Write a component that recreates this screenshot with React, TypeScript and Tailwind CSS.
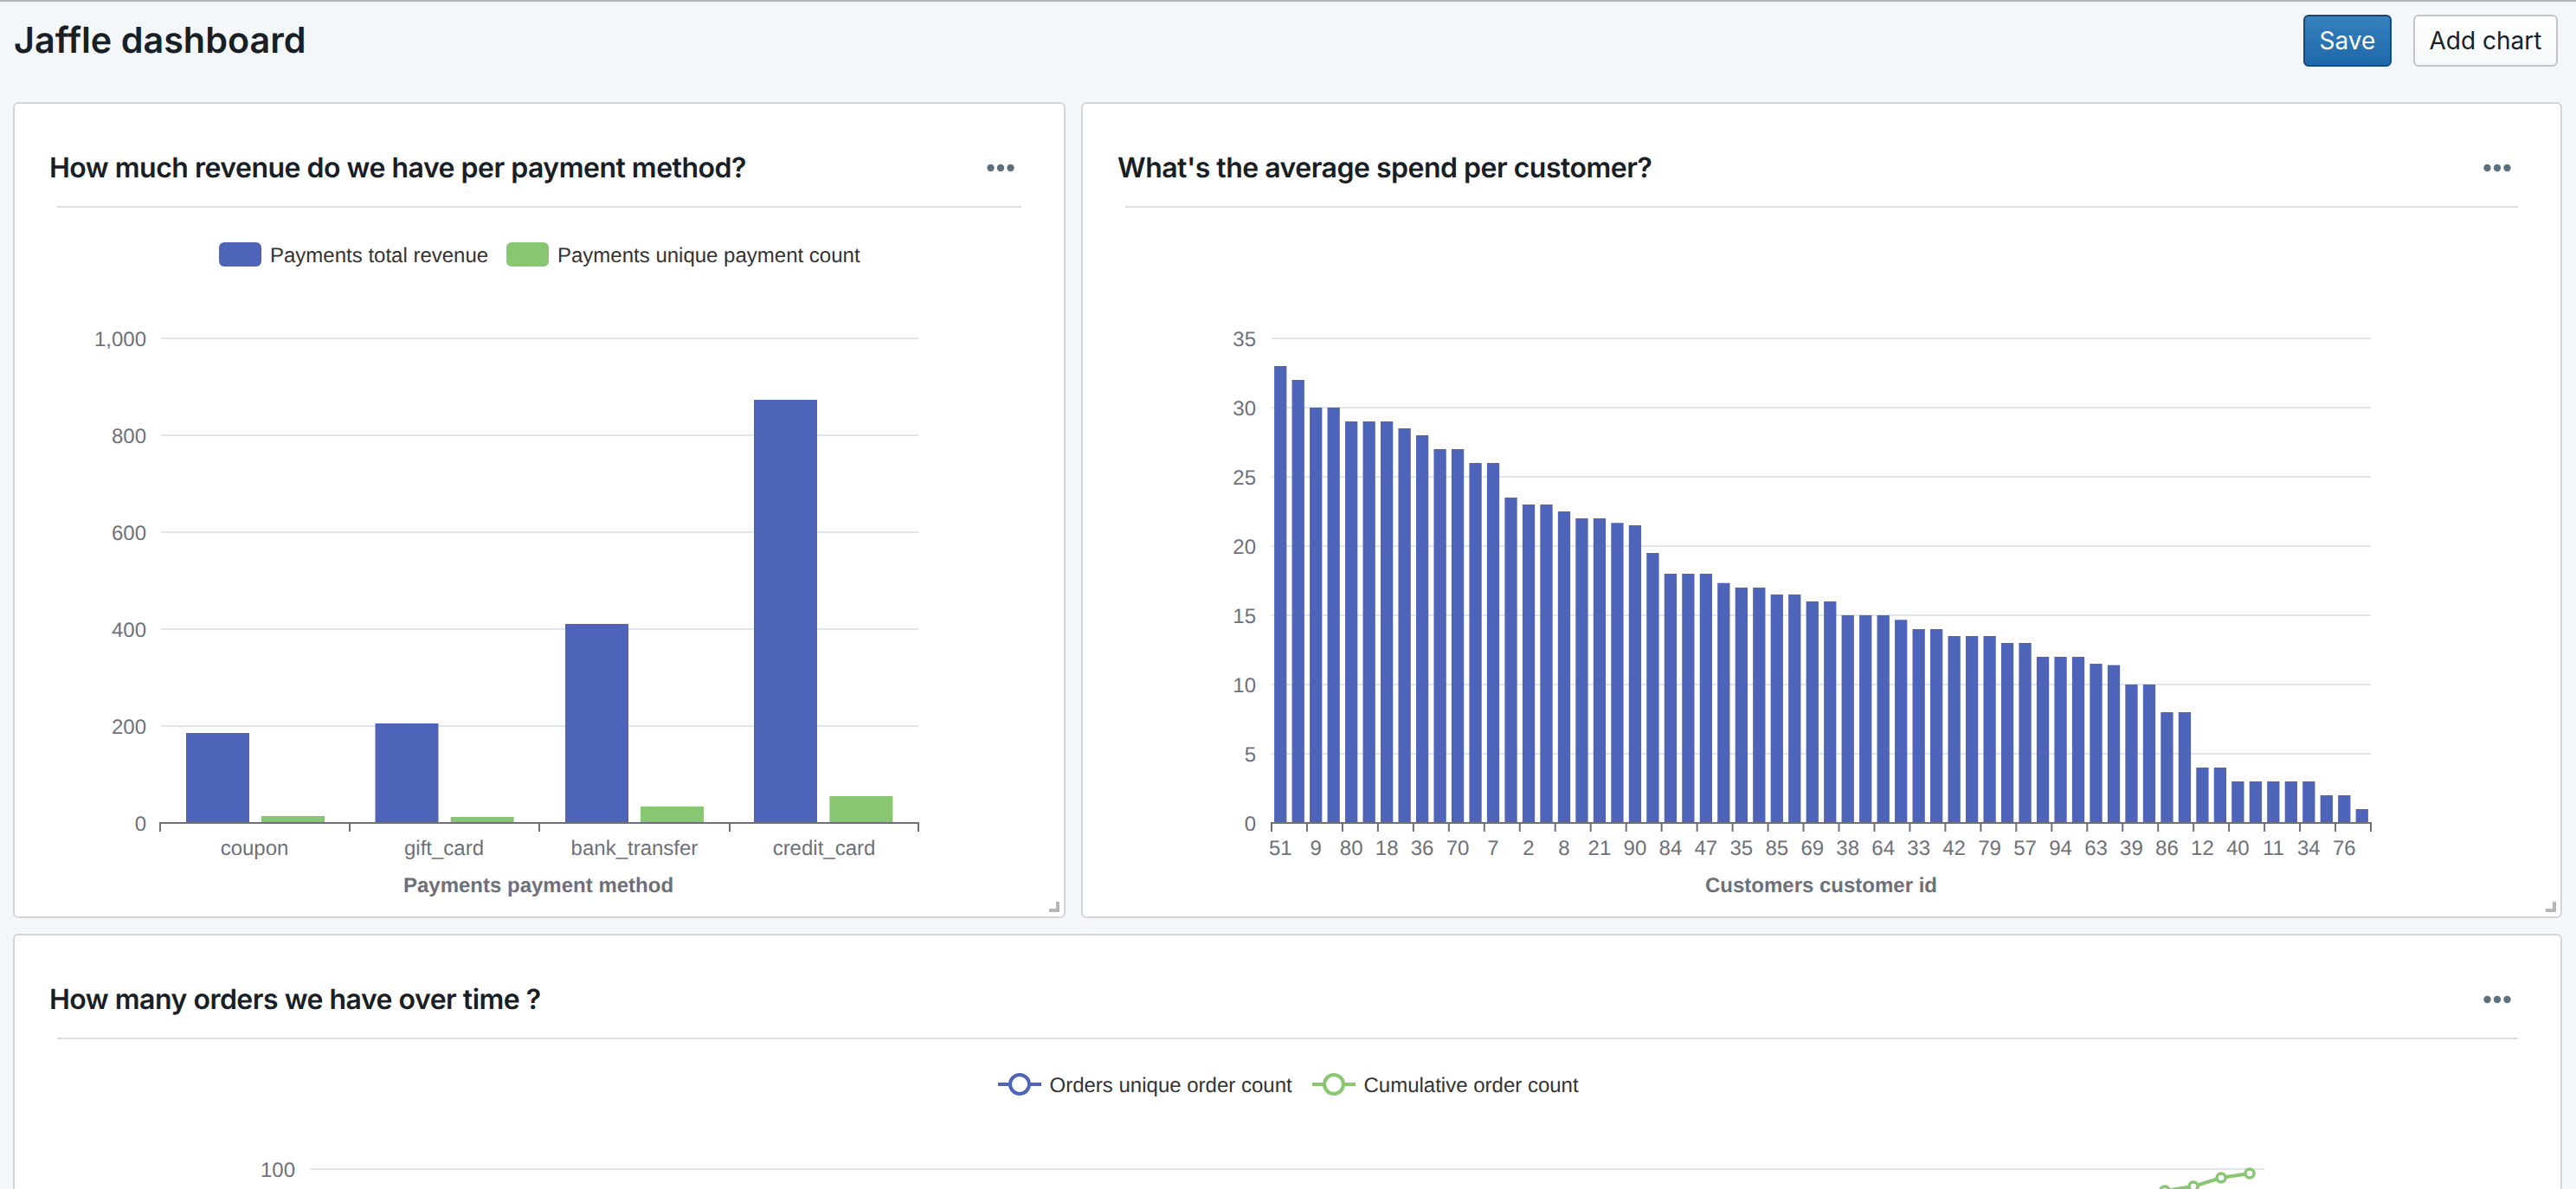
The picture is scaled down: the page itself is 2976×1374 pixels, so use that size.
const BLUE = "#4e64b9";
const GREEN = "#89c672";
const GRID = "#e0e6f1";
const AXIS = "#6e7079";

function MoreDots() {
  return (
    <svg width="32" height="10" viewBox="0 0 32 10" className="shrink-0">
      <circle cx="4.5" cy="5" r="4.2" fill="#5c7080" />
      <circle cx="16" cy="5" r="4.2" fill="#5c7080" />
      <circle cx="27.5" cy="5" r="4.2" fill="#5c7080" />
    </svg>
  );
}

function Card({ title, children }: { title: string; children: React.ReactNode }) {
  return (
    <section className="relative h-[943px] rounded-[6px] border-2 border-[#d1d5da] bg-white">
      <header className="flex h-[118px] items-center justify-between pt-[30px] pr-[57px] pl-[40px]">
        <h2 className="font-['Inter'] text-[32px] leading-[44px] font-semibold tracking-[-0.5px] text-[#182026]">{title}</h2>
        <MoreDots />
      </header>
      <div className="mx-[49px] h-[2px] bg-[#dcdfe2]" />
      {children}
      <svg width="12" height="12" viewBox="0 0 12 12" className="absolute right-[5px] bottom-[5px]">
        <path d="M8 0h4v12H0V8h8z" fill="#b5b5b5" />
      </svg>
    </section>
  );
}

function Axis({ x0, x1, ticks }: { x0: number; x1: number; ticks: number[] }) {
  return (
    <g stroke={AXIS} strokeWidth="2">
      <line x1={x0 - 1} x2={x1 + 1} y1="950" y2="950" />
      {ticks.map((t) => (
        <line key={t} x1={t} x2={t} y1="950" y2="960" />
      ))}
    </g>
  );
}

function YGrid({ x0, x1, rows, labelX }: { x0: number; x1: number; rows: [string, number][]; labelX: number }) {
  return (
    <>
      {rows.map(([label, y]) => (
        <g key={label}>
          <line x1={x0} x2={x1} y1={y} y2={y} stroke={GRID} strokeWidth="2" />
          <text x={labelX} y={y + 8.5} textAnchor="end" className="font-['Liberation_Sans'] text-[24px] fill-[#6e7079]">
            {label}
          </text>
        </g>
      ))}
    </>
  );
}

function PaymentsChart() {
  const bars = [
    { label: "coupon", cx: 294, blue: [215, 846], green: [302, 942] },
    { label: "gift_card", cx: 513, blue: [433.5, 835], green: [520.7, 943] },
    { label: "bank_transfer", cx: 733, blue: [653, 720], green: [740, 931] },
    { label: "credit_card", cx: 952, blue: [871, 461], green: [958.4, 919] },
  ];
  const rows: [string, number][] = [
    ["1,000", 390],
    ["800", 502],
    ["600", 614],
    ["400", 726],
    ["200", 838],
    ["0", 950],
  ];
  return (
    <svg width="1212" height="819" viewBox="17 240 1212 819" className="block">
      <rect x="253" y="280" width="49" height="28" rx="6" fill={BLUE} />
      <text x="312" y="303" className="font-['Liberation_Sans'] text-[24px] fill-[#333333]">Payments total revenue</text>
      <rect x="585" y="280" width="49" height="28" rx="6" fill={GREEN} />
      <text x="644" y="303" className="font-['Liberation_Sans'] text-[24px] fill-[#333333]">Payments unique payment count</text>
      <g transform="translate(0 1)">
        <YGrid x0={185} x1={1061} rows={rows} labelX={169} />
        {bars.map((b) => (
          <g key={b.label}>
            <rect x={b.blue[0]} y={b.blue[1]} width="73" height={950 - b.blue[1]} fill={BLUE} />
            <rect x={b.green[0]} y={b.green[1]} width="73" height={950 - b.green[1]} fill={GREEN} />
            <text x={b.cx} y="987" textAnchor="middle" className="font-['Liberation_Sans'] text-[24px] fill-[#6e7079]">
              {b.label}
            </text>
          </g>
        ))}
        <Axis x0={185} x1={1061} ticks={[185, 404, 623, 843, 1061]} />
      </g>
      <text x="622" y="1031" textAnchor="middle" className="font-['Liberation_Sans'] text-[24px] font-bold fill-[#6e7079]">
        Payments payment method
      </text>
    </svg>
  );
}

const spend = [
  33, 32, 30, 30, 29, 29, 29, 28.5, 28, 27, 27, 26, 26, 23.5, 23, 23, 22.5, 22, 22, 21.67, 21.5, 19.5, 18, 18, 18, 17.33,
  17, 17, 16.5, 16.5, 16, 16, 15, 15, 15, 14.67, 14, 14, 13.5, 13.5, 13.5, 13, 13, 12, 12, 12, 11.5, 11.4, 10, 10, 8, 8,
  4, 4, 3, 3, 3, 3, 3, 2, 2, 1,
];
const customerLabels = [
  "51", "9", "80", "18", "36", "70", "7", "2", "8", "21", "90", "84", "47", "35", "85", "69", "38", "64", "33", "42",
  "79", "57", "94", "63", "39", "86", "12", "40", "11", "34", "76",
];

function SpendChart() {
  const x0 = 1469;
  const x1 = 2739;
  const band = (x1 - x0) / 62;
  const rows: [string, number][] = [35, 30, 25, 20, 15, 10, 5, 0].map((v) => [String(v), 950 - v * 16]);
  const ticks = customerLabels.map((_, i) => x0 + i * 2 * band).concat(x1);
  return (
    <svg width="1707" height="819" viewBox="1251 240 1707 819" className="block">
      <g transform="translate(0 1)">
        <YGrid x0={x0} x1={x1} rows={rows} labelX={1451} />
        {spend.map((v, i) => (
          <rect key={i} x={x0 + i * band + 3.1} y={950 - v * 16} width={band - 6.2} height={v * 16} fill={BLUE} />
        ))}
        <Axis x0={x0} x1={x1} ticks={ticks} />
        {customerLabels.map((l, i) => (
          <text key={l} x={x0 + (i * 2 + 0.5) * band} y="987" textAnchor="middle" className="font-['Liberation_Sans'] text-[24px] fill-[#6e7079]">
            {l}
          </text>
        ))}
      </g>
      <text x="2104" y="1031" textAnchor="middle" className="font-['Liberation_Sans'] text-[24px] font-bold fill-[#6e7079]">
        Customers customer id
      </text>
    </svg>
  );
}

function LegendLine({ cx, color }: { cx: number; color: string }) {
  return (
    <g>
      <line x1={cx - 25} x2={cx + 25} y1="1253" y2="1253" stroke={color} strokeWidth="4" />
      <circle cx={cx} cy="1253" r="11" fill="#fff" stroke={color} strokeWidth="4" />
    </g>
  );
}

function OrdersChart() {
  const pts: [number, number][] = [
    [2402, 1394],
    [2435, 1390],
    [2468, 1382],
    [2501, 1376],
    [2534, 1371],
    [2566, 1361],
    [2599, 1356],
  ];
  return (
    <svg width="2941" height="400" viewBox="17 1201 2941 400" className="block">
      <LegendLine cx={1178} color={BLUE} />
      <text x="1212.5" y="1262" className="font-['Liberation_Sans'] text-[24px] fill-[#333333]">Orders unique order count</text>
      <LegendLine cx={1541} color={GREEN} />
      <text x="1575.5" y="1262" className="font-['Liberation_Sans'] text-[24px] fill-[#333333]">Cumulative order count</text>
      <YGrid x0={358} x1={2616} rows={[["100", 1351]]} labelX={341} />
      <polyline points={pts.map((p) => p.join(",")).join(" ")} fill="none" stroke={GREEN} strokeWidth="4" />
      {pts.map(([x, y]) => (
        <circle key={x} cx={x} cy={y} r="5" fill="#fff" stroke={GREEN} strokeWidth="3.5" />
      ))}
    </svg>
  );
}

export default function App() {
  return (
    <div className="h-[1374px] w-[2976px] overflow-hidden border-t-2 border-[#b0b5ba] bg-[#f3f7fa] font-['Inter',sans-serif] [text-rendering:geometricPrecision]">
      <div className="flex h-[116px] items-start justify-between pt-[15px] pr-[21px] pl-[16px]">
        <h1 className="-mt-[1px] text-[41.3px] leading-[60px] font-semibold text-[#182026]">Jaffle dashboard</h1>
        <div className="flex gap-[25px]">
          <button className="h-[60px] w-[102px] rounded-[6px] border-2 border-[#17497a] bg-gradient-to-b from-[#3580bd] to-[#1f69aa] text-[28px] text-white">
            Save
          </button>
          <button className="h-[60px] w-[167px] rounded-[6px] border-2 border-[#c2c6ca] bg-gradient-to-b from-white to-[#f5f8fa] text-[28px] text-[#182026]">
            Add chart
          </button>
        </div>
      </div>
      <div className="grid grid-cols-[1216px_1711px] gap-[18px] pl-[15px]">
        <Card title="How much revenue do we have per payment method?">
          <PaymentsChart />
        </Card>
        <Card title="What's the average spend per customer?">
          <SpendChart />
        </Card>
        <div className="col-span-2">
          <Card title="How many orders we have over time ?">
            <OrdersChart />
          </Card>
        </div>
      </div>
    </div>
  );
}
